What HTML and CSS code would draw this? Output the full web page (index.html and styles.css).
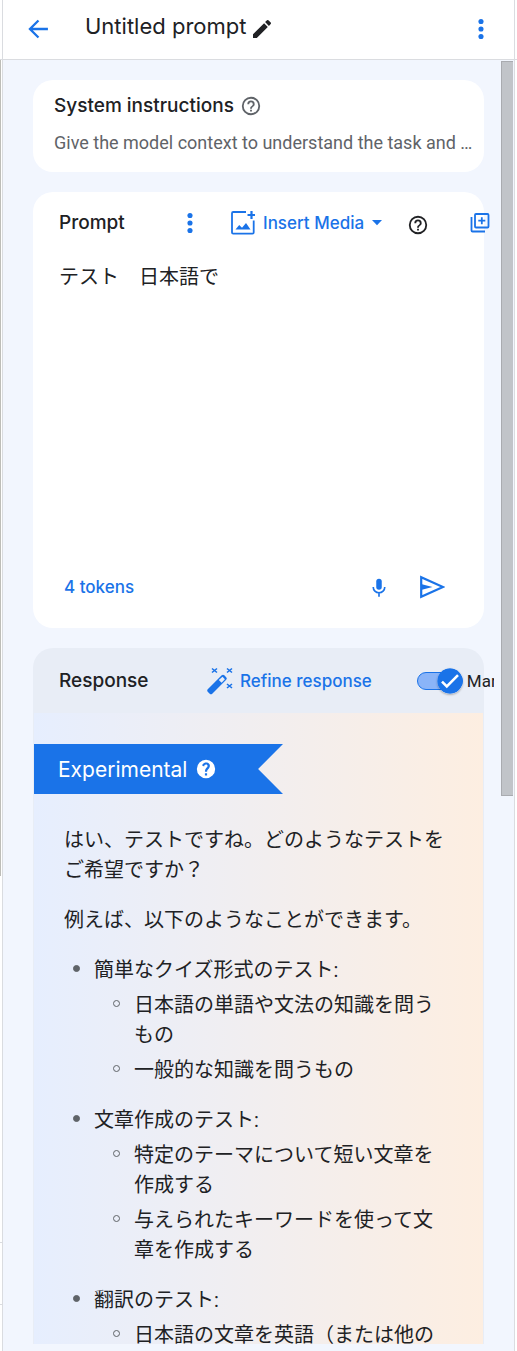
FILE: index.html
```html
<!DOCTYPE html>
<html lang="en">
<head>
<meta charset="utf-8">
<meta name="viewport" content="width=device-width, initial-scale=1">
<title>Untitled prompt</title>
<link rel="stylesheet" href="styles.css">
</head>
<body>
<div class="app">
  <div class="rail"><div class="rail-top"></div><div class="rail-track"></div><div class="rail-gap"></div><div class="rail-box"></div></div>
  <div class="panel">
    <header class="topbar">
      <button class="icon-btn blue" aria-label="Back"><svg width="28" height="28" viewBox="0 0 24 24"><path fill="currentColor" d="M20.500 11H7.500l5.600-5.600L11.700 4l-8 8 8 8 1.400-1.400L7.500 13h13z"/></svg></button>
      <h1 class="doc-title">Untitled prompt</h1>
      <button class="icon-btn edit" aria-label="Rename"><svg width="24" height="24" viewBox="0 0 24 24"><path fill="currentColor" d="M3 17.2V21h3.8L17.8 9.9l-3.7-3.7zM20.7 7a1 1 0 0 0 0-1.4l-2.3-2.3a1 1 0 0 0-1.4 0l-1.9 1.8 3.8 3.8z"/></svg></button>
      <button class="icon-btn blue more" aria-label="More options"><svg width="28" height="28" viewBox="0 0 24 24"><g fill="currentColor"><circle cx="12" cy="5.6" r="2.2"/><circle cx="12" cy="12" r="2.2"/><circle cx="12" cy="18.4" r="2.2"/></g></svg></button>
    </header>
    <div class="body">
      <main class="cards">
        <section class="card system">
          <div class="system-head">
            <label class="heading" for="system">System instructions</label>
            <svg class="grey" width="22" height="22" viewBox="0 0 24 24"><path fill="currentColor" d="M11 18h2v-2h-2zM12 2a10 10 0 1 0 0 20 10 10 0 0 0 0-20zm0 18a8 8 0 1 1 0-16 8 8 0 0 1 0 16zm0-14a4 4 0 0 0-4 4h2a2 2 0 1 1 4 0c0 2-3 1.8-3 5h2c0-2.3 3-2.5 3-5a4 4 0 0 0-4-4z"/></svg>
          </div>
          <input class="system-input" id="system" type="text" placeholder="Give the model context to understand the task and …">
        </section>

        <section class="card prompt">
          <div class="card-head prompt-head">
            <label class="heading prompt-title" for="prompt">Prompt</label>
            <button class="icon-btn blue" aria-label="Prompt options"><svg width="28" height="28" viewBox="0 0 24 24"><g fill="currentColor"><circle cx="12" cy="5.6" r="2.2"/><circle cx="12" cy="12" r="2.2"/><circle cx="12" cy="18.4" r="2.2"/></g></svg></button>
            <button class="text-btn insert">
              <svg width="24" height="24" viewBox="0 0 24 24" fill="none" stroke="currentColor" stroke-width="1.8"><path d="M15 1H2.200Q1 1 1 2.200V21.500Q1 22.700 2.200 22.700H21.500Q22.700 22.700 22.700 21.500V9.500"/><path stroke-width="2.2" d="M20.500 0v8M16.500 4h8"/><path fill="currentColor" stroke="none" d="M4.500 18.500 8.200 14l2.800 2.700 4-4.700 4.500 6.500z"/></svg>
              Insert Media
              <svg class="caret" width="10" height="6" viewBox="0 0 10 6"><path fill="currentColor" d="M0 0h10L5 5.300z"/></svg>
            </button>
            <button class="icon-btn help" aria-label="Help"><svg width="22" height="22" viewBox="0 0 24 24"><path fill="currentColor" d="M11 18h2v-2h-2zM12 2a10 10 0 1 0 0 20 10 10 0 0 0 0-20zm0 18a8 8 0 1 1 0-16 8 8 0 0 1 0 16zm0-14a4 4 0 0 0-4 4h2a2 2 0 1 1 4 0c0 2-3 1.800-3 5h2c0-2.300 3-2.500 3-5a4 4 0 0 0-4-4z"/></svg></button>
            <button class="icon-btn blue add" aria-label="Add example"><svg width="20" height="20" viewBox="0 0 20 20" fill="none" stroke="currentColor" stroke-width="1.800"><rect x="5" y="1" width="13.500" height="13.500" rx="1"/><path d="M1.500 4v13.500q0 1 1 1H15M11.800 4.200v7M8.300 7.700h7"/></svg></button>
          </div>
          <textarea class="prompt-text" id="prompt" lang="ja">テスト　日本語で</textarea>
          <div class="prompt-foot">
            <button class="text-btn">4 tokens</button>
            <button class="icon-btn blue mic" aria-label="Voice input"><svg width="22" height="22" viewBox="0 0 24 24" fill="none"><rect x="9" y="3" width="6" height="12" rx="3" fill="currentColor"/><path stroke="currentColor" stroke-width="1.800" d="M5.700 12a6.300 6.300 0 0 0 12.600 0M12 18v4.500"/></svg></button>
            <button class="icon-btn blue" aria-label="Run"><svg width="26" height="24" viewBox="0 0 26 24"><path fill="none" stroke="currentColor" stroke-width="2.200" d="M2.200 2.300v19.400L24 12z"/><path fill="currentColor" d="M2 8.900 13.500 12 2 15.100z"/></svg></button>
          </div>
        </section>

        <section class="card response">
          <div class="card-head response-head">
            <h2 class="heading response-title">Response</h2>
            <button class="text-btn refine">
              <svg width="28" height="28" viewBox="0 0 28 28"><path fill="currentColor" fill-rule="evenodd" d="M1.500 22.500 15.700 8.300q1.300-1.300 2.600 0l1.900 1.900q1.300 1.300 0 2.600L6 27q-1.200.8-2.300-.3l-2-2q-1-1-.2-2.200zM12.800 12.900l2.800 2.800 3.300-3.500-2.400-2.500z"/><path fill="none" stroke="currentColor" stroke-width="1.600" d="m6 1.500 5 4m0-4-5 4M21 1.500l5 4m0-4-5 4M21 17l5 4m0-4-5 4"/></svg>
              Refine response
            </button>
            <label class="switch">
              <input class="switch-input" type="checkbox" checked>
              <svg class="thumb" width="26" height="26" viewBox="0 0 26 26"><circle cx="13" cy="13" r="12.700" fill="#1a73e8"/><path fill="none" stroke="#fff" stroke-width="2.600" d="m5 13.600 4.800 4.800L21 7.200"/></svg>
              <span>Markdown</span>
            </label>
          </div>
          <div class="answer">
            <div class="ribbon">Experimental
              <svg width="22" height="22" viewBox="0 0 24 24"><path fill="currentColor" d="M12 2a10 10 0 1 0 0 20 10 10 0 0 0 0-20zm1.200 17h-2.400v-2.400h2.400zm2.300-8.100c-1.100 1.500-2.300 1.900-2.300 4h-2.400c0-3.200 1.500-3.800 2.500-5.100.9-1.200.2-2.600-1.200-2.600-1.300 0-1.900.9-2.100 2l-2.200-.9C8.300 6.500 9.700 5 12.100 5c3.900 0 5.100 3.400 3.400 5.900z"/></svg>
            </div>
            <div class="answer-text" lang="ja">
              <p>はい、テストですね。どのようなテストをご希望ですか？</p>
              <p>例えば、以下のようなことができます。</p>
              <ul class="topics">
                <li>簡単なクイズ形式のテスト:
                  <ul class="details"><li>日本語の単語や文法の知識を問うもの</li><li>一般的な知識を問うもの</li></ul>
                </li>
                <li>文章作成のテスト:
                  <ul class="details"><li>特定のテーマについて短い文章を作成する</li><li>与えられたキーワードを使って文章を作成する</li></ul>
                </li>
                <li>翻訳のテスト:
                  <ul class="details"><li>日本語の文章を英語（または他の</li></ul>
                </li>
              </ul>
            </div>
          </div>
        </section>
      </main>
      <div class="scrollbar"><div class="scroll-thumb"></div></div>
    </div>
  </div>
  <div class="edge"></div>
</div>
</body>
</html>
```
FILE: styles.css
```css
* { box-sizing: border-box; }
body { margin: 0; background: #fff; color: #202124; font-family: Roboto, "Noto Sans CJK JP", sans-serif; font-size: 18px; }
h1, h2, p, ul { margin: 0; padding: 0; font-weight: 400; }
button, input, textarea { margin: 0; padding: 0; border: 0; background: none; color: inherit; font: inherit; }
button { display: flex; align-items: center; }
svg { display: block; flex: none; }

.app { display: flex; height: 100vh; overflow: hidden; }
.rail { display: flex; flex-direction: column; flex: 0 0 2px; }
.rail-top { height: 60px; border-bottom: 1px solid #dadce0; }
.rail-track { flex: 0 0 816px; border-left: 1px solid #bdbdb8; }
.rail-gap { flex: 1; }
.rail-box { height: 109px; border-top: 1px solid #dadce0; }
.rail-box::before { content: ""; display: block; height: 61px; border-bottom: 1px solid #dadce0; }
.panel { display: flex; flex: 1; flex-direction: column; min-width: 0; border: solid #dadce0; border-width: 0 1px; }
.edge { flex: 0 0 2px; height: 60px; border-bottom: 1px solid #dadce0; }

.topbar { display: flex; flex: 0 0 60px; align-items: center; padding: 0 19px 2px 21px; border-bottom: 1px solid #dadce0; }
.doc-title { margin-left: 33px; font-family: Inter, sans-serif; font-size: 22px; line-height: 28px; padding-bottom: 6px; }
.edit { margin-left: 4px; }
.more { margin-left: auto; }
.blue { color: #1a73e8; }
.grey { color: #5f6368; }
.icon-btn { flex: none; }

.body { display: flex; flex: 1; min-height: 0; background: #f2f6fe; }
.cards { display: flex; flex: 1; flex-direction: column; gap: 20px; min-width: 0; padding: 20px 17px 7px 30px; }
.card { flex: none; border-radius: 20px; background: #fff; }
.scrollbar { flex: 0 0 13px; padding: 1px 1px 0 0; }
.scroll-thumb { height: 57%; border: solid #a9abb0; border-width: 1px 0 1px 1px; background: #c1c4c9; }

.heading { font-family: Inter, sans-serif; font-size: 19px; font-weight: 500; line-height: 26px; }
.text-btn { flex: none; color: #1a73e8; font-family: Inter, sans-serif; font-size: 17px; font-weight: 500; line-height: 24px; white-space: nowrap; }

.system { padding: 13px 10px 17px 21px; }
.system-head { display: flex; align-items: center; gap: 6px; }
.system-input { display: block; width: 100%; height: 26px; margin-top: 10px; outline: 0; text-overflow: ellipsis; }
.system-input::placeholder { color: #5f6368; opacity: 1; }

.card-head { display: flex; align-items: center; margin-right: -10px; padding-left: 26px; overflow: hidden; }
.prompt-head { height: 62px; }
.prompt-title { flex: 0 0 117px; }
.insert { margin-left: 27px; gap: 8px; }
.help { margin-left: 25px; padding-top: 4px; }
.add { margin-left: 41px; }
.prompt-text { display: block; width: 100%; height: 300px; padding: 8px 26px; outline: 0; resize: none; font-size: 20px; line-height: 30px; }
.prompt-foot { display: flex; align-items: center; height: 74px; padding: 0 39px 8px 31px; }
.mic { margin-left: auto; margin-right: 29px; }

.response { display: flex; flex: 1; flex-direction: column; min-height: 0; border-radius: 20px 20px 0 0; background: #e8edf6; }
.response-head { flex: 0 0 65px; padding-top: 1px; }
.response-title { flex: 0 0 147px; }
.refine { gap: 6px; }
.switch { position: relative; display: flex; flex: none; align-items: center; gap: 4px; margin-left: 45px; font-size: 17px; }
.switch-input { width: 46px; height: 18px; border: 1px solid #1a73e8; border-radius: 9px; background: #8ab4f8; appearance: none; }
.thumb { position: absolute; left: 20px; border-radius: 50%; box-shadow: 0 1px 2px #0004; }

.answer { flex: 1; min-height: 0; margin: 0 1px; padding-top: 31px; overflow: hidden; background: linear-gradient(90deg, #e6eefe, #fdeee1); }
.ribbon { display: flex; align-items: center; gap: 8px; width: 249px; height: 50px; padding-left: 24px; background: #1a73e8; clip-path: polygon(0 0, 100% 0, 90% 50%, 100% 100%, 0 100%); color: #fff; font-family: Inter, sans-serif; font-size: 21px; }
.answer-text { padding: 31px 36px 0 30px; font-size: 20px; line-height: 30px; }
.answer-text p { margin-bottom: 20px; }
.topics, .details { list-style: none; }
.topics > li, .details > li { position: relative; }
.topics > li { margin-bottom: 20px; padding-left: 30px; }
.details > li { margin-top: 5px; padding-left: 40px; }
.topics > li::before, .details > li::before { content: ""; position: absolute; top: 10px; width: 5px; height: 5px; border: 1px solid #5f6368; border-radius: 50%; }
.topics > li::before { left: 9px; background: #5f6368; }
.details > li::before { left: 19px; }
```
